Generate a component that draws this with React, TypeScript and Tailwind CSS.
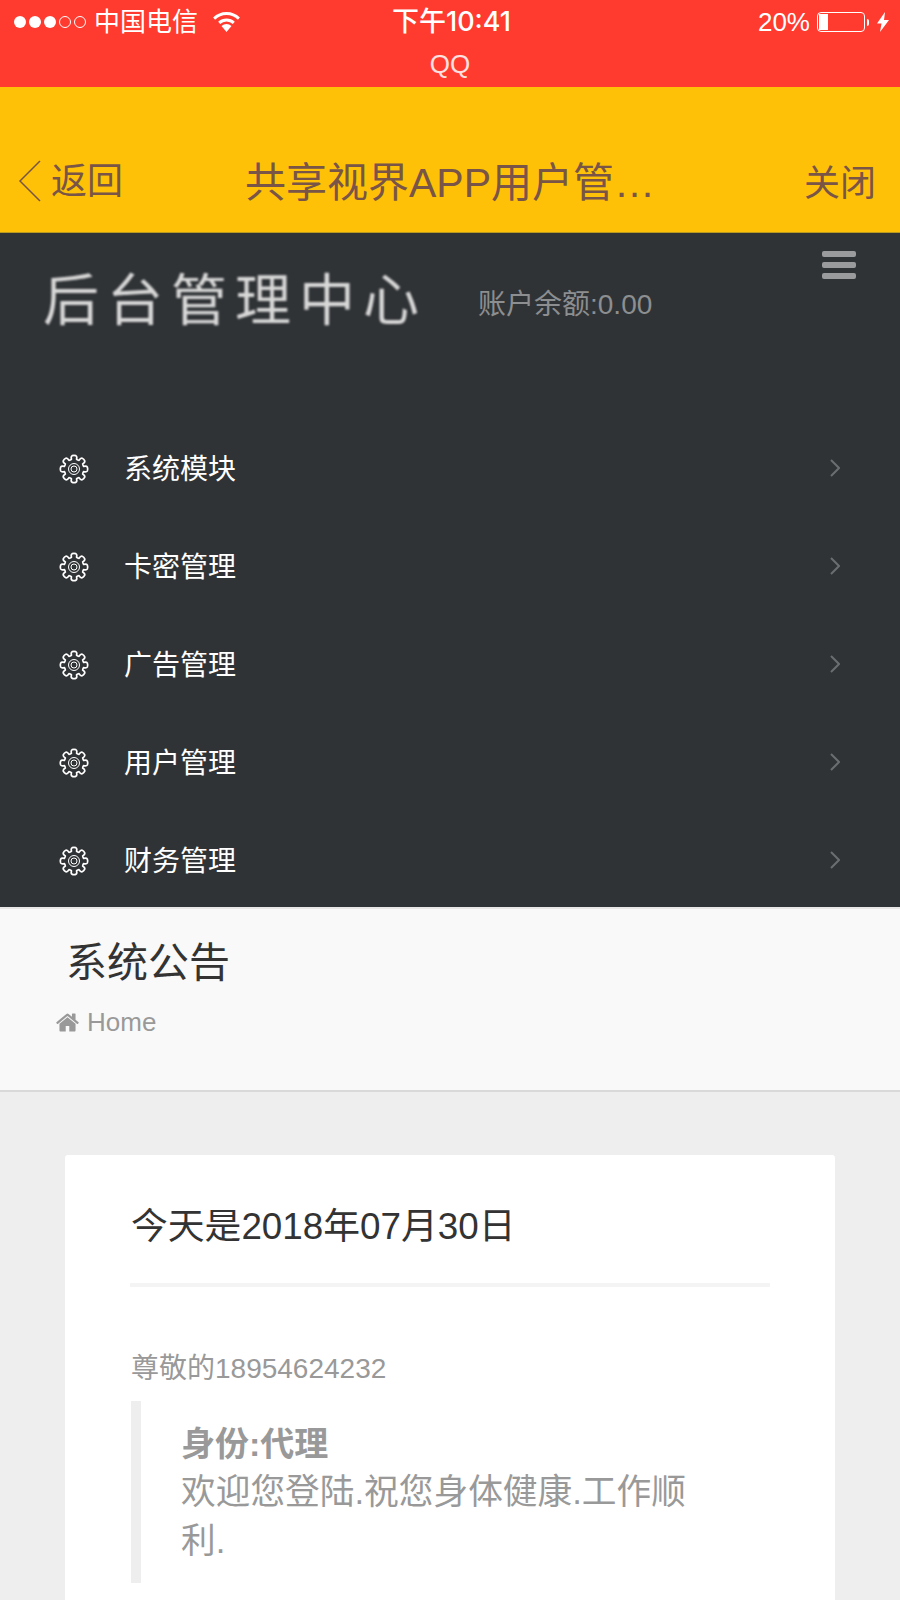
import React from 'react';

const menuItems = ['系统模块', '卡密管理', '广告管理', '用户管理', '财务管理'];

// outline of a cog with rounded teeth
const buildGearPath = (teeth: number, outer: number, inner: number) => {
  const points: string[] = [];
  const step = (Math.PI * 2) / teeth;
  for (let i = 0; i < teeth; i++) {
    const a = i * step - Math.PI / 2;
    const pt = (r: number, t: number) => `${(15 + r * Math.cos(t)).toFixed(2)} ${(15 + r * Math.sin(t)).toFixed(2)}`;
    const w = step * 0.17;
    const g = step * 0.33;
    points.push(`${i === 0 ? 'M' : 'L'}${pt(inner, a - g)}`);
    points.push(`Q${pt(outer * 0.96, a - g)} ${pt(outer, a - w)}`);
    points.push(`Q${pt(outer * 1.04, a)} ${pt(outer, a + w)}`);
    points.push(`Q${pt(outer * 0.96, a + g)} ${pt(inner, a + g)}`);
    points.push(`Q${pt(inner * 0.96, a + step / 2)} ${pt(inner, a + step - g)}`);
  }
  return points.join(' ') + 'Z';
};

const gearPath = buildGearPath(8, 13.5, 10);

const Gear = () => (
  <svg width="30" height="30" viewBox="0 0 30 30" fill="none" stroke="white" className="shrink-0">
    <path d={gearPath} strokeWidth="1.7" strokeLinejoin="round" />
    <circle cx="15" cy="15" r="5.5" strokeWidth="1" />
    <circle cx="15" cy="15" r="3" strokeWidth="1" />
  </svg>
);

const Chevron = () => (
  <svg width="10" height="18" viewBox="0 0 10 18" fill="none" stroke="#6b6e71" strokeWidth="2" className="mb-[2px] shrink-0">
    <path d="M1 1l8 8-8 8" />
  </svg>
);

const HomeIcon = () => (
  <svg width="25" height="25" viewBox="0 0 1792 1792" fill="#999999" className="shrink-0">
    <path d="M1472 992v480q0 26-19 45t-45 19h-384v-384h-256v384h-384q-26 0-45-19t-19-45v-480q0-1 .5-3t.5-3l575-474 575 474q1 2 1 6zm223-69l-62 74q-8 9-21 11h-3q-13 0-21-7l-692-577-692 577q-12 8-24 7-13-2-21-11l-62-74q-8-10-7-23.5t11-21.5l719-599q32-26 76-26t76 26l244 204v-195q0-14 9-23t23-9h192q14 0 23 9t9 23v408l219 182q10 8 11 21.5t-7 23.5z" />
  </svg>
);

const Wifi = () => (
  <svg width="27" height="20" viewBox="0 0 27 20" fill="white" className="shrink-0">
    <path d="M13.500 20l-5-6a7.500 7.500 0 0 1 10 0z" />
    <path d="M13.500 6.500a12 12 0 0 1 8.300 3.300l-2 2.300a9 9 0 0 0-12.600 0l-2-2.300a12 12 0 0 1 8.300-3.300z" />
    <path d="M13.500 0a19 19 0 0 1 13.400 5.500l-2 2.300a16 16 0 0 0-22.800 0l-2-2.300A19 19 0 0 1 13.500 0z" />
  </svg>
);

export default function App() {
  return (
    <div className="h-[1600px] w-[900px] overflow-hidden bg-[#eeeeee] font-['Liberation_Sans','Noto_Sans_CJK_SC',sans-serif]">
      {/* status bar */}
      <div className="h-[87px] bg-[#ff3b30] text-white">
        <div className="flex h-[44px] items-center justify-between pl-[14px] pr-[11px] text-[26px]">
          <div className="flex w-[300px] items-center">
            <div className="flex gap-[3px]">
              <span className="h-3 w-3 rounded-full bg-white"></span>
              <span className="h-3 w-3 rounded-full bg-white"></span>
              <span className="h-3 w-3 rounded-full bg-white"></span>
              <span className="h-3 w-3 rounded-full border border-white"></span>
              <span className="h-3 w-3 rounded-full border border-white"></span>
            </div>
            <span className="ml-[8px]">中国电信</span>
            <span className="ml-[15px]"><Wifi /></span>
          </div>
          <div className="font-['Inter','Noto_Sans_CJK_SC',sans-serif] text-[27px] font-medium">下午10:41</div>
          <div className="flex w-[300px] items-center justify-end">
            <span>20%</span>
            <div className="ml-[7px] flex h-[20px] w-[48px] rounded-[4px] border border-white p-[1px]">
              <div className="h-full w-[9px] bg-white"></div>
            </div>
            <div className="ml-[2px] h-[7px] w-[2px] rounded-r bg-white"></div>
            <svg width="12" height="20" viewBox="0 0 12 20" fill="white" className="ml-[8px]">
              <path d="M8 0L0 11.500h4.500L3 20l9-12H7z" />
            </svg>
          </div>
        </div>
        <div className="text-center text-[26px] leading-[40px] text-white/85">QQ</div>
      </div>

      {/* nav bar */}
      <div className="flex h-[146px] items-end border-b border-[#b89a20] bg-[#ffc107] pb-[28px] text-[#795548]">
        <div className="flex w-[230px] items-center pl-[18px]">
          <svg width="24" height="42" viewBox="0 0 24 42" fill="none" stroke="#795548" strokeWidth="1.500">
            <path d="M22 1L2 21l20 20" />
          </svg>
          <span className="ml-[9px] mt-[3px] text-[36px] leading-[44px]">返回</span>
        </div>
        <div className="-mb-[1px] w-[440px] truncate pl-[15px] text-[41px] leading-[44px]">共享视界APP用户管…</div>
        <div className="-mb-[2px] flex-1 pr-[24px] text-right text-[36px] leading-[44px]">关闭</div>
      </div>

      {/* side menu */}
      <div className="h-[674px] overflow-hidden bg-[#303336]">
        <div className="flex h-[187px] items-start">
          <div className="ml-[43px] mt-[36px] text-[56px] leading-[64px] tracking-[8px] text-[#d8d8d8] blur-[0.8px]">后台管理中心</div>
          <div className="ml-[51px] mt-[52px] text-[28px] leading-[40px] text-[#8c8e90]">账户余额:0.00</div>
          <div className="ml-auto mr-[44px] mt-[18px] flex w-[34px] flex-col gap-[5px]">
            <span className="h-[6px] rounded-[2px] bg-[#9a9b9c]"></span>
            <span className="h-[6px] rounded-[2px] bg-[#9a9b9c]"></span>
            <span className="h-[6px] rounded-[2px] bg-[#9a9b9c]"></span>
          </div>
        </div>
        {menuItems.map((item) => (
          <div key={item} className="flex h-[98px] items-center pl-[59px] pr-[60px] text-[28px] text-white">
            <Gear />
            <span className="ml-[35px] mt-[2px] flex-1">{item}</span>
            <Chevron />
          </div>
        ))}
      </div>

      {/* page heading */}
      <div className="h-[185px] border-y-2 border-t-[#e7e7e7] border-b-[#d9d9d9] bg-[#f9f9f9]">
        <h1 className="pl-[66px] pt-[27px] text-[41px] leading-[54px] text-[#333333]">系统公告</h1>
        <div className="mt-[14px] flex items-center pl-[55px] text-[26px] leading-[36px] text-[#999999]">
          <HomeIcon />
          <span className="ml-[7px]">Home</span>
        </div>
      </div>

      {/* notice card */}
      <div className="mx-[65px] mt-[63px] rounded-[3px] bg-white px-[65px] pb-[40px] pt-[49px]">
        <div className="border-b-[4px] border-[#f4f4f4] pb-[33px] pl-[1px] text-[36.8px] leading-[46px] text-[#333333]">今天是2018年07月30日</div>
        <p className="mt-[62px] pl-[1px] text-[28px] leading-[40px] text-[#999999]">尊敬的18954624232</p>
        <div className="ml-[1px] mt-[12px] border-l-[10px] border-[#eeeeee] pb-[17px] pl-[40px] pt-[20px] text-[34.7px] leading-[49px] text-[#999999]">
          <div className="w-[530px]">
            <strong className="block text-[34px] font-bold leading-[47px]">身份:代理</strong>
            欢迎您登陆.祝您身体健康.工作顺利.
          </div>
        </div>
      </div>
    </div>
  );
}
